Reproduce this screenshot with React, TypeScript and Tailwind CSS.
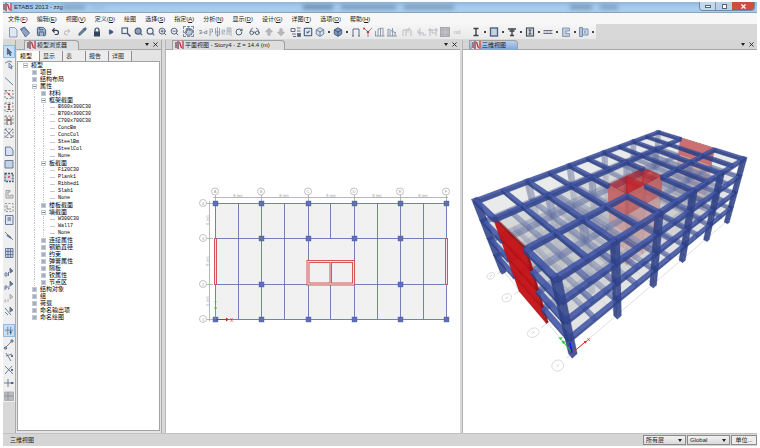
import { useState } from "react";
import type { ReactNode } from "react";
import { Save, Undo2, Redo2, Pencil, Lock, Play, ZoomIn, ZoomOut, Search, Hand, RotateCcw, Glasses, ArrowBigUp, ArrowBigDown, Box, SquareCheck, X } from "lucide-react";

const MENUS: [string, string?][] = [
  ["文件", "F"], ["编辑", "E"], ["视图", "V"], ["定义", "D"], ["绘图"], ["选择", "S"], ["指定", "A"],
  ["分析", "N"], ["显示", "D"], ["设计", "G"], ["详图", "T"], ["选项", "O"], ["帮助", "H"],
];

/* level, label, state: "-" open, "+" closed, "" leaf */
const TREE: [number, string, string][] = [
  [0, "模型", "-"], [1, "项目", "+"], [1, "结构布局", "+"], [1, "属性", "-"],
  [2, "材料", "+"], [2, "框架截面", "-"],
  [3, "B600x300C30", ""], [3, "B700x300C30", ""], [3, "C700x700C30", ""], [3, "ConcBm", ""],
  [3, "ConcCol", ""], [3, "SteelBm", ""], [3, "SteelCol", ""], [3, "None", ""],
  [2, "板截面", "-"],
  [3, "F120C30", ""], [3, "Plank1", ""], [3, "Ribbed1", ""], [3, "Slab1", ""], [3, "None", ""],
  [2, "楼板截面", "+"], [2, "墙截面", "-"],
  [3, "W300C30", ""], [3, "Wall7", ""], [3, "None", ""],
  [2, "连接属性", "+"], [2, "钢筋直径", "+"], [2, "约束", "+"], [2, "弹簧属性", "+"],
  [2, "隔板", "+"], [2, "铰属性", "+"], [2, "节点区", "+"],
  [1, "结构对象", "+"], [1, "组", "+"], [1, "荷载", "+"], [1, "命名输出项", "+"], [1, "命名绘图", "+"],
];

/* ===== icons ===== */
function Glyph({ children }: { children: ReactNode }) {
  return (
    <svg viewBox="0 0 12 12" className="w-3 h-3" fill="none" stroke="#5f7291" strokeWidth=".9">{children}</svg>
  );
}

function AppLogo() {
  return (
    <svg viewBox="0 0 9 8" className="w-[9px] h-2 shrink-0">
      <rect width="9" height="8" fill="#ead9dd" />
      <path d="M1 1v6M3 0v8" stroke="#6b4659" strokeWidth="1.300" />
      <path d="M4.500 1L6.500 7M8 0v8" stroke="#b3303c" strokeWidth="1.200" />
    </svg>
  );
}

const dark = "#526079";
const pale = "#b3b6bb";
const dot = <circle cx="6" cy="6" r=".9" fill="#d03038" stroke="none" />;

type Tool = { name: string; icon?: ReactNode; gap?: string; drop?: boolean };

const TOOLS: Tool[] = [
  { name: "新建", icon: <Glyph><path d="M2.500 1.500h5l2.500 2.500v7h-7.500z" fill="#dfe8f2" stroke="#8292a8" /></Glyph> },
  { name: "打开", icon: <Glyph><path d="M1.500 3l4-2 5 6-4 4z" fill="#7b93b5" stroke="#50688c" /><path d="M3 5l5 4M4 3.500l5 4" stroke="#c8d5e6" strokeWidth=".6" /></Glyph> },
  { name: "保存", gap: "ml-1", icon: <Save size={11} color="#3f5779" fill="#a3b8d0" /> },
  { name: "撤销", gap: "ml-0.5", icon: <Undo2 size={9} strokeWidth={3} color="#36435a" /> },
  { name: "重做", icon: <Redo2 size={8} strokeWidth={3} color={pale} /> },
  { name: "刷新", gap: "ml-[3px]", icon: <Pencil size={9} color="#3a4d67" fill="#6c84a3" /> },
  { name: "锁定", gap: "ml-[3px]", icon: <Glyph><path d="M4 6V4a2 2 0 0 1 4 0v2" stroke="#34465f" strokeWidth="1.200" /><rect x="3" y="5.500" width="6" height="5" fill="#34465f" stroke="none" /></Glyph> },
  { name: "运行", gap: "ml-0.5", icon: <Play size={6} color="#3a5680" fill="#3a5680" /> },
  { name: "窗口缩放", gap: "ml-[3px]", icon: <Glyph><rect x="2" y="2" width="5.500" height="5.500" strokeWidth="1.200" stroke={dark} /><path d="M7.500 7.500l3 3" strokeWidth="1.600" stroke={dark} /></Glyph> },
  { name: "全部显示", icon: <Search size={9} strokeWidth={3} color={dark} fill="#8fa0b8" /> },
  { name: "上一视图", icon: <Search size={9} strokeWidth={3} color={dark} /> },
  { name: "放大", icon: <ZoomIn size={9} strokeWidth={2.5} color={dark} /> },
  { name: "缩小", icon: <ZoomOut size={9} strokeWidth={2.5} color={dark} /> },
  { name: "平移", gap: "ml-0.5", icon: <span className="border border-dashed border-[#7d8ba0]"><Hand size={9} strokeWidth={2.5} color={dark} fill="#b9c9dc" /></span> },
  { name: "三维", gap: "ml-[3px]", icon: <span className="text-[6px] text-[#4d5a70]">3-d</span> },
  { name: "平面", icon: <Glyph><path d="M1 10V3h2.500v3H1M6.500 2v4h4M6.500 8v-2M10.500 2v7h-4M8.500 1v10" stroke="#8490a4" strokeWidth=".8" /></Glyph> },
  { name: "立面", icon: <Glyph><path d="M4 6H1v-2h2.500v2M1 6v2h3M6 2v7M6 2h4v3h-4M10 5v5M8 2v7" stroke="#9aa4b3" strokeWidth=".8" /></Glyph> },
  { name: "旋转", icon: <RotateCcw size={8} strokeWidth={3} color={dark} className="-scale-x-100" /> },
  { name: "透视", gap: "ml-[3px]", icon: <Glasses size={11} color={dark} /> },
  { name: "上移", gap: "ml-[3px]", icon: <ArrowBigUp size={10} strokeWidth={2} color={pale} fill={pale} /> },
  { name: "下移", icon: <ArrowBigDown size={10} strokeWidth={2} color={pale} fill={pale} /> },
  { name: "对象", gap: "ml-[3px]", icon: <Glyph><path d="M1 2.500h4v3H1zM7 2h3.500M7 5h3.500M2 8h4M3 10.500h3" stroke={dark} /><rect x="7.500" y="7.500" width="3" height="3" fill={dark} /></Glyph> },
  { name: "显示选项", icon: <SquareCheck size={10} strokeWidth={2.5} color="#3f5374" fill="#dbe6f3" /> },
  { name: "选定", drop: true, icon: <Box size={10} color="#5b7291" fill="#d3dfec" /> },
  { name: "实体", drop: true, icon: <Box size={10} color="#3b5172" fill="#7d97b8" /> },
  { name: "框架", icon: <Glyph><path d="M3 10V3h6v7M2 10h2M8 10h2" stroke={dark} /></Glyph> },
  { name: "变形", icon: <Glyph><path d="M2 2l4 4 4-4M6 6v5" stroke="#777f8d" /><circle cx="6" cy="6" r="1.300" fill="#cf3340" stroke="none" /><circle cx="2" cy="2.500" r="1" fill="#cf3340" stroke="none" /></Glyph> },
  { name: "内力", icon: <Glyph><path d="M1.500 10V5M4 10V3M6.500 10V2M9 10V2M1 10h9.500M4 3l5-1" stroke="#8593a8" /></Glyph> },
  { name: "能量", icon: <Glyph><path d="M2 10V3M4 10V5M6.500 10V2M9 10V6M1 10h10M2 3l8 4" stroke="#8593a8" /></Glyph> },
  { name: "设计", gap: "ml-[3px]", icon: <Glyph><path d="M2 10V4h3v6M5 4l4-2M7 4h3v6M7 4v3" stroke={pale} /></Glyph> },
  { name: "校核", gap: "ml-0.5", icon: <Glyph><path d="M5 2v8M3 4v3h4M8 6v3h3" stroke={pale} /></Glyph> },
  { name: "连接", icon: <Glyph><path d="M1 4h10M3 2v8M9 2v8M5 4v3h3" stroke={pale} /></Glyph> },
  { name: "网格", icon: <Glyph><rect x="1.500" y="1.500" width="9" height="9" fill="#b2b4b8" stroke="#a2a5a9" /><path d="M6 2v8M2 6h8" stroke="#c6c8cb" /></Glyph> },
  { name: "无", icon: <span className="text-[6px] text-[#b0b3b8]">nd</span> },
  { name: "钢框架设计", gap: "ml-[7px]", drop: true, icon: <Glyph><path d="M3.500 2.500h5M3.500 9.500h5M6 2.500v7" stroke="#3a404a" strokeWidth="1.400" /></Glyph> },
  { name: "混凝土框架设计", drop: true, icon: <Glyph><rect x="2.500" y="2" width="7" height="8" fill="#c3d3e6" stroke="#51637f" strokeWidth="1.400" /></Glyph> },
  { name: "组合梁设计", drop: true, icon: <Glyph><path d="M2 3h8M6 3v7M4 9.500h4M3.500 5h5" stroke="#3a404a" strokeWidth="1.300" /></Glyph> },
  { name: "组合柱设计", drop: true, icon: <Glyph><rect x="2.500" y="2" width="7" height="8" stroke="#4a5361" fill="#d7dde5" strokeWidth="1.200" /><path d="M4.500 4h3M4.500 8h3M6 4v4" stroke="#2e3440" /></Glyph> },
  { name: "钢桁架设计", drop: true, icon: <Glyph><path d="M1.500 4.500h9M1.500 7.500h9" stroke="#596270" /><path d="M1.500 6h9" stroke="#7c8592" strokeDasharray="2 1" /></Glyph> },
  { name: "剪力墙设计", drop: true, icon: <Glyph><path d="M2.500 2h7v3h-3.500v2.500h3.500v3h-7z" fill="#b9cbe0" stroke="#8496ad" /></Glyph> },
  { name: "钢连接设计", drop: true, icon: <Glyph><path d="M1.500 1.500h3v9h-3z" fill="#a9c2e0" stroke="#7389a8" /><path d="M4.500 3h5.500v6h-5.500z" fill="#cfdae6" stroke="#7389a8" /><path d="M7 4.500v3" /></Glyph> },
];

/* the drawing tools on the left edge, in groups */
const SIDE: { gap: string; items: [string, ReactNode][] }[] = [
  { gap: "", items: [
    ["选择", <path d="M4 1.500v7.500l1.800-1.500 1.500 3 1.200-.6-1.500-2.900h2.300z" fill="#4f6b97" stroke="#2f4a75" strokeWidth=".7" />],
    ["重塑", <path d="M2 4l4-2 3 1M6 4v5l1-1 1 2 1-.5-1-2h1.500z" fill="#cbd5e2" strokeWidth=".8" />],
  ] },
  { gap: "mt-[3px]", items: [
    ["绘制线", <path d="M2 2.500l8 7.500" />],
    ["快速线", <><path d="M2 2.500h8v8h-8z" strokeDasharray="2 1.500" stroke="#777" /><path d="M2 2.500l8 8" />{dot}</>],
    ["快速柱", <><path d="M2 2h8v8.500h-8z" strokeDasharray="2 1.500" stroke="#777" /><path d="M6 3.500v5M4.500 3.500h3M4.500 8.500h3" stroke="#444" />{dot}</>],
    ["次梁", <><path d="M2 2h8v8.500h-8z" strokeDasharray="2 1.500" stroke="#777" /><path d="M4 3v7M8 3v7M4 6h4" stroke="#444" />{dot}</>],
    ["支撑", <><path d="M2 2h8v8.500h-8z" strokeDasharray="2 1.500" stroke="#777" /><path d="M2 2l8 8.500M10 2l-8 8.500" /></>],
  ] },
  { gap: "mt-[5px]", items: [
    ["多边形板", <path d="M2.500 2h5l2.500 3v5.500h-7.500z" fill="#d5e1ee" />],
    ["矩形板", <path d="M2 2.500h8v7.500h-8z" fill="#c3d3e4" />],
    ["快速板", <><path d="M2 2.500h8v8h-8z" fill="#cddbe9" strokeDasharray="2 1" stroke="#4f5765" strokeWidth="1.300" />{dot}</>],
  ] },
  { gap: "mt-1", items: [
    ["绘制墙", <path d="M7 2.500H3v7.500h7V7H8v1H5V4h2z" fill="#e4e4e4" stroke="#999" />],
    ["快速墙", <><path d="M2 2.500h8v8h-8z" strokeDasharray="2 1.500" stroke="#888" /><path d="M4 4v4h4" stroke="#888" /></>],
    ["墙洞", <><path d="M2.500 1.500h7.500v9h-7.500z" fill="#dae5f1" /><path d="M4.500 4h3.500M4.500 6h3.500" stroke="#3d4f6d" /></>],
  ] },
  { gap: "mt-[3px]", items: [["连接", <><path d="M2 2l8 8" stroke="#777" /><path d="M4 5l4 3" strokeWidth="1.800" /></>]] },
  { gap: "mt-1", items: [["轴网", <><path d="M2.500 1.500h7.500v9h-7.500z" fill="#c9d8e8" /><path d="M5 2v8.500M7.500 2v8.500M2.500 4.500h7.500M2.500 7.500h7.500" /></>]] },
  { gap: "mt-1.5", items: [
    ["全选", <><path d="M2 10V7h2v3H2M5.500 6v4" strokeWidth=".9" /><path d="M7 2l3 3-3 2z" fill="#5f7aa3" /></>],
    ["前次选择", <><path d="M2 11V7h2v2H2M6 7v3h-1" strokeWidth=".9" /><path d="M7 2l3 3-3 2z" fill="#5f7aa3" /></>],
    ["清除选择", <><path d="M3 8h-1v2h1M5 7v3" stroke="#aaa" /><path d="M7 2l3 3-3 2z" fill="#ccc" stroke="#aaa" /></>],
    ["相交选择", <><path d="M2 3l6 7M2 7l3 3" /><path d="M7 2l3 3-3 2z" fill="#5f7aa3" /></>],
  ] },
  { gap: "mt-[7px]", items: [
    ["捕捉点", <><path d="M1 5h10M4.500 1v9.500M8 1v9.500" stroke="#56759f" /><circle cx="8" cy="7.500" r="1.200" fill="#345" stroke="none" /></>],
    ["捕捉端点", <><path d="M2 10l7-7" /><path d="M1.500 9h2v2h-2zM8 2h2v2h-2z" fill="#9fb0c6" /></>],
    ["捕捉中点", <><path d="M3 2l5 8M3 5l6-2" /><circle cx="9" cy="5" r="1" fill="#345" stroke="none" /></>],
    ["捕捉交点", <><path d="M2 2l8 8M9 2l-7 8" /><circle cx="9" cy="6" r="1" fill="#345" stroke="none" /></>],
    ["捕捉垂足", <><path d="M1 6h10M5 2v8" /><circle cx="9" cy="6" r="1" fill="#345" stroke="none" /></>],
    ["捕捉网格", <><path d="M1.500 2h9v8.500h-9z" fill="#b8bbbf" stroke="#aaa" /><path d="M1.500 6h9M5 2v8" stroke="#8d9095" /></>],
  ] },
];

/* ===== plan view ===== */
const PX = [215, 261, 308, 354, 400, 446];
const PY = [203, 238, 284, 319];

function PlanView() {
  const mids = [238, 284, 331, 377, 423];
  const skip = ["0,1", "0,2", "5,1", "5,2", "2,2", "3,2"];
  return (
    <svg viewBox="166 50 294 383" className="w-full h-full" fontFamily="Liberation Sans, sans-serif">
      <rect x="215" y="203" width="231" height="116" fill="#f1f1f1" />
      <g stroke="#a5a5a5" strokeWidth=".8" fill="none">
        <path d="M213 197.500H448M209.500 201V321" />
        {PX.map(x => <path key={x} d={`M${x + .5} 195V203`} />)}
        {PY.map(y => <path key={y} d={`M207 ${y + .5}H213`} />)}
      </g>
      {PX.map((x, i) => (
        <g key={x}>
          <circle cx={x} cy="191.500" r="3.500" fill="#fff" stroke="#b3b3b3" strokeWidth=".8" />
          <text x={x} y="193" fontSize="4" textAnchor="middle" fill="#999">{"ABCDEF"[i]}</text>
          {i < 5 && <text x={x + 23} y="196.500" fontSize="4" textAnchor="middle" fill="#999">8 (m)</text>}
        </g>
      ))}
      {PY.map((y, i) => (
        <g key={y}>
          <circle cx="203" cy={y} r="3.500" fill="#fff" stroke="#b3b3b3" strokeWidth=".8" />
          <text x="203" y={y + 1.500} fontSize="4" textAnchor="middle" fill="#999">{4 - i}</text>
        </g>
      ))}
      {[220, 261, 301].map((y, i) => (
        <text key={y} transform={`translate(208.500 ${y}) rotate(-90)`} fontSize="4" textAnchor="middle" fill="#999">{i === 1 ? "8 (m)" : "6 (m)"}</text>
      ))}
      <g stroke="#6373ae" strokeWidth=".9" fill="none">
        {PY.map(y => <path key={y} d={`M215 ${y + .5}H446`} />)}
        {PX.map(x => <path key={x} d={`M${x + .5} 203V319`} />)}
        {mids.map(x => x === 331
          ? <path key={x} d="M330.500 203V238M330.500 284V319" />
          : <path key={x} d={`M${x + .5} 203V319`} />)}
      </g>
      <g stroke="#d4565b" fill="none" strokeWidth="1">
        <rect x="214.500" y="238.500" width="2" height="46" fill="#fbe4e4" />
        <rect x="445.500" y="238.500" width="2" height="46" fill="#fbe4e4" />
        <rect x="307" y="260.500" width="47.500" height="24.500" fill="#fbe4e4" />
        <rect x="309" y="262.500" width="21" height="20.500" fill="#f1f1f1" />
        <rect x="331.500" y="262.500" width="21" height="20.500" fill="#f1f1f1" />
      </g>
      {PX.map((x, i) => PY.map((y, j) => skip.includes(`${i},${j}`) ? null
        : <rect key={`${x}-${y}`} x={x - 2} y={y - 2} width="5" height="5" fill="#5f6fb5" stroke="#4a5aa0" strokeWidth=".4" />))}
      <path d="M215.500 319V304M214 308h3" stroke="#21d336" />
      <path d="M216 319.500H227" stroke="#d22" />
      <path d="M226 317.500l3 2-3 2z" fill="#d22" />
      <text x="230" y="321.500" fontSize="5" fill="#d22">X</text>
      <text x="214" y="304" fontSize="4" fill="#21d336">Y</text>
    </svg>
  );
}

/* ===== 3D view ===== */
type P3 = [number, number, number];
type Shape = { depth: number; pts: string; fill: string; opacity: number; edge: string };

const depthOf = ([x, y, z]: P3) => 1 + 0.01591 * x + 0.01605 * y - 0.0165 * z;

function project(p: P3): [number, number] {
  const [x, y, z] = p;
  const w = depthOf(p);
  return [(572 + 15.44 * x + 4.55 * y - 10.34 * z) / w, (353 + 0.216 * x + 0.225 * y - 9.847 * z) / w];
}

const poly = (pts: P3[]) => pts.map(p => project(p).map(n => n.toFixed(1)).join(",")).join(" ");

/* the eye is always above and on the -x / -y side, so only these three faces show */
function box([x0, y0, z0]: P3, [x1, y1, z1]: P3, fills: string[], edge: string, opacity: number): Shape[] {
  const depth = depthOf([(x0 + x1) / 2, (y0 + y1) / 2, (z0 + z1) / 2]);
  const faces: P3[][] = [
    [[x0, y0, z0], [x0, y1, z0], [x0, y1, z1], [x0, y0, z1]],
    [[x0, y0, z0], [x1, y0, z0], [x1, y0, z1], [x0, y0, z1]],
    [[x0, y0, z1], [x1, y0, z1], [x1, y1, z1], [x0, y1, z1]],
  ];
  return faces.map((f, i) => ({ depth, pts: poly(f), fill: fills[i], opacity, edge }));
}

const BLUE = ["#2f4185", "#34478f", "#4458a8"];
const GX = [0, 8, 16, 24, 32, 40];
const GY = [0, 6, 14, 20];
const H = 3.6;

function buildModel() {
  const out: Shape[] = [];
  const far = (a: Shape, b: Shape) => b.depth - a.depth;
  for (let s = 0; s < 4; s++) {
    const z0 = s * H;
    const z1 = z0 + H;
    const parts: Shape[] = [];
    /* columns, the inner ones more transparent */
    GX.forEach(x => GY.forEach(y => {
      const inner = y === 6 || y === 14;
      if (inner && (x === 0 || x === 40)) return;
      if (y === 6 && (x === 16 || x === 24)) return;
      const alpha = y === 0 || x === 0 ? 0.9 : 0.5;
      parts.push(...box([x - 0.4, y - 0.4, s === 0 ? -0.3 : z0], [x + 0.4, y + 0.4, z1], BLUE, "#273775", alpha));
    }));
    /* walls */
    const near = ["#c41418", "#a01014", "#8a0d11"];
    const red = ["#c8262a", "#b8262a", "#c04044"];
    const top = s === 3;
    parts.push(...box([-0.15, 6, z0], [0.15, 14, z1], near, "#7c0c10", 0.97));
    parts.push(...box([39.9, 6, z0], [40.1, 14, z1], red, "#a83c40", top ? 0.9 : 0.7));
    [16, 20, 24].forEach(x => parts.push(...box([x - 0.1, 6, z0], [x + 0.1, 10, z1], red, "#8f2226", top ? 0.75 : 0.6)));
    [16, 20].forEach(x => [6, 10].forEach(y =>
      parts.push(...box([x, y - 0.1, z0], [x + 4, y + 0.1, z1], red, "#8f2226", top ? 0.7 : 0.55))));
    out.push(...parts.sort(far));

    /* floor plate, left open over the core */
    const slab = (x0: number, y0: number, x1: number, y1: number) => out.push({
      depth: 0, pts: poly([[x0, y0, z1], [x1, y0, z1], [x1, y1, z1], [x0, y1, z1]]),
      fill: "#c6c7c9", opacity: top ? 0.38 : 0.5, edge: "none",
    });
    slab(0, 0, 16, 20);
    slab(16, 0, 24, 6);
    slab(16, 10, 24, 20);
    slab(24, 0, 40, 20);

    /* beams */
    const beams: Shape[] = [];
    const zb = z1 - 0.65;
    GX.slice(0, 5).forEach(x => GY.forEach(y => {
      if (x === 16 && y === 6) return;
      const alpha = top || y === 0 ? 0.9 : 0.6;
      beams.push(...box([x, y - 0.3, zb], [x + 8, y + 0.3, z1], BLUE, "#2a3a7c", alpha));
    }));
    for (let x = 0; x <= 40; x += 4) {
      [[0, 6], [6, 14], [14, 20]].forEach(([y0, y1]) => {
        if (y0 === 6 && (x === 0 || x === 20 || x === 40)) return;
        const start = y0 === 6 && (x === 16 || x === 24) ? 10 : y0;
        const t = x % 8 === 0 ? 0.3 : 0.25;
        const alpha = top || x === 0 ? 0.9 : 0.6;
        beams.push(...box([x - t, start, zb], [x + t, y1, z1], BLUE, "#2a3a7c", alpha));
      });
    }
    out.push(...beams.sort(far));
  }
  return out;
}

const MODEL = buildModel();

function ModelView() {
  const bubbles = [[490, 276, 4, 3], [506, 298, 5, 4], [532.5, 333, 6, 4.5], [557, 366, 6, 5.5]];
  return (
    <svg viewBox="462 50 295 383" className="w-full h-full">
      <g stroke="#cfcfcf" strokeWidth=".7" fill="none">
        {GX.map(x => <polyline key={x} points={poly([[x, 0, 0], [x, 20, 0]])} />)}
        {GY.map(y => <polyline key={y} points={poly([[-1, y, 0], [40, y, 0]])} />)}
        {bubbles.map(([cx, cy, rx, ry]) => (
          <g key={cx}>
            <ellipse cx={cx} cy={cy} rx={rx} ry={ry} transform={`rotate(-25 ${cx} ${cy})`} />
            <path d={`M${cx - 1} ${cy + 1}l2-2`} stroke="#aaa" />
          </g>
        ))}
      </g>
      {MODEL.map((f, i) => (
        <polygon key={i} points={f.pts} fill={f.fill} fillOpacity={f.opacity} stroke={f.edge} strokeWidth=".4" strokeOpacity={f.opacity * 0.7} />
      ))}
      <path d="M572 353L585 342" stroke="#e22" />
      <path d="M583 341.500l3.500-.5-1.500 3z" fill="#e22" />
      <path d="M586.500 338.500l3 3M589.500 338.500l-3 3" stroke="#e22" strokeWidth=".7" />
      <path d="M571 352L562 342" stroke="#1fcf33" />
      <path d="M561 341l3.500 1-2 2zM558 338l2 2 1.500-2.500" fill="#1fcf33" stroke="#1fcf33" strokeWidth=".6" />
      <path d="M571.500 353L569 343" stroke="#1414e6" strokeWidth="1.500" />
    </svg>
  );
}

/* ===== panels ===== */
function PanelHead({ title, active, indent, pad }: { title: string; active?: boolean; indent: string; pad: string }) {
  return (
    <div className={`h-[10px] shrink-0 flex items-center bg-[#d5d5d5] border-b border-[#a6a6a6] ${indent}`}>
      <h2 className={`h-[10px] flex items-center gap-px pl-0.5 rounded-tr-sm border border-b-0 border-[#9f9f9f] whitespace-nowrap ${pad} ${
        active ? "bg-linear-to-b from-[#b7d0ef] to-[#7fa5dc]" : "bg-[#dedede]"
      }`}>
        <AppLogo />{title}
      </h2>
      <span className="flex-1" />
      <button aria-label="窗口位置" className="w-2 flex justify-center">
        <svg viewBox="0 0 4 3" className="w-1 h-[3px]"><path d="M0 0h4L2 3z" fill="#222" /></svg>
      </button>
      <button aria-label="关闭" className="w-2 mr-0.5 flex justify-center"><X size={7} strokeWidth={3} color="#222" /></button>
    </div>
  );
}

function ModelTree() {
  return (
    <ul className="pl-[3px]">
      {TREE.map(([level, label, state], i) => (
        <li key={i} className="h-[7px] flex items-center leading-[7px] whitespace-nowrap">
          {Array.from({ length: level }, (_, n) => (
            <span key={n} className="w-[9px] h-[7px] flex justify-center shrink-0">
              {n > 0 && <span className="border-l border-dotted border-[#c4c4c4] h-[7px]" />}
            </span>
          ))}
          <span className="w-[9px] shrink-0 flex items-center justify-center">
            {state
              ? <button aria-label={label} className="w-[5px] h-[5px] border border-[#c3c9d3] bg-white flex items-center justify-center">
                  <span className={state === "+" ? "w-[3px] h-[3px] bg-[#a3aec2]" : "w-[3px] h-px bg-[#7b879e]"} />
                </button>
              : <span className="w-[5px] border-t border-[#c8c8c8]" />}
          </span>
          <span className={state ? "pl-px" : "pl-px font-['Liberation_Mono',monospace] text-[5px]"}>{label}</span>
        </li>
      ))}
    </ul>
  );
}

export default function App() {
  const [tab, setTab] = useState("模型");
  const tabs = ["模型", "显示", "表", "报告", "详图"];

  return (
    <div className="h-screen flex flex-col bg-white pl-[3px] pr-[3px] pt-0.5 pb-0.5 overflow-hidden font-['Liberation_Sans','Noto_Sans_CJK_SC',sans-serif] text-[6px] leading-[8px] text-[#222]">
      {/* title bar */}
      <header className="h-[11px] shrink-0 flex items-center bg-linear-to-b from-[#8fb9dd] via-[#a5cbee] to-[#a9cdec] border-b border-[#88a5bd]">
        <AppLogo />
        <h1 className="ml-0.5 text-[6px] text-[#1c2733]">ETABS 2013 - zzg</h1>
        <div className="flex-1 flex items-center gap-2 blur-[2px]" aria-hidden="true">
          <span className="w-[22px] h-1 bg-[#7d9dbb]" />
          <span className="w-3 h-0.5 bg-[#8badcb]" />
          <span className="w-[182px]" />
          <span className="w-[30px] h-1 bg-[#6384a5]" />
          <span className="w-[55px] h-1 bg-[#7393b4]" />
          <span className="w-[50px] h-1 bg-[#7595b5]" />
          <span className="w-[100px]" />
          <span className="w-[22px] h-1 bg-[#7393b3]" />
          <span className="w-[18px] h-1 bg-[#7999b9]" />
        </div>
        <div className="flex self-start h-[9px] mr-0.5 rounded-b-sm overflow-hidden border border-t-0 border-[#6e8aa8]">
          <button aria-label="最小化" className="w-4 flex items-center justify-center bg-[#c3d8ec] border-r border-[#7893ae]"><span className="w-1.5 h-[3px] border border-[#53657a] bg-white" /></button>
          <button aria-label="还原" className="w-4 flex items-center justify-center bg-[#b9d0e8]"><span className="w-[5px] h-[5px] border border-[#53657a] bg-white" /></button>
          <button aria-label="关闭窗口" className="w-[22px] flex items-center justify-center bg-[#cc4e3f]"><X size={7} strokeWidth={4} color="#fff" /></button>
        </div>
      </header>

      {/* menu */}
      <nav className="h-[11px] shrink-0 flex items-center gap-[9px] pl-[5px] bg-[#f7f7f7]">
        {MENUS.map(([label, key]) => (
          <button key={label} className="whitespace-nowrap">{label}{key && <>(<u>{key}</u>)</>}</button>
        ))}
      </nav>

      {/* toolbar */}
      <div className="h-[15px] shrink-0 flex bg-[#d8d8d8]">
        <div className="flex items-center pl-1 bg-linear-to-b from-[#f6f6f6] to-[#e9e9e9]">
          {TOOLS.map(t => (
            <div key={t.name} className={`flex items-center shrink-0 ${t.gap ?? ""}`}>
              <button aria-label={t.name} className="w-3 h-3 flex items-center justify-center whitespace-nowrap">{t.icon}</button>
              {t.drop && <span className="w-1.5 flex justify-center"><span className="w-0.5 h-0.5 bg-[#444]" /></span>}
            </div>
          ))}
        </div>
      </div>

      <main className="flex-1 min-h-0 flex bg-[#d8d8d8] pt-px">
        <div className="w-3 shrink-0 flex flex-col pt-[5px]">
          <div className="flex flex-col bg-[#efefef]">
            {SIDE.map((g, i) => (
              <div key={i} className={`flex flex-col ${g.gap}`}>
                {g.items.map(([name, art]) => (
                  <button key={name} aria-label={name} className={`h-[13px] flex items-center justify-center ${
                    name === "选择" || name === "捕捉点" ? "bg-[#c4def5] border border-[#8fbbe5]" : ""
                  }`}><Glyph>{art}</Glyph></button>
                ))}
              </div>
            ))}
          </div>
        </div>

        {/* model browser */}
        <section className="w-[147px] shrink-0 flex flex-col border-x border-[#a9a9a9] bg-[#e4e4e4]">
          <PanelHead title="模型浏览器" indent="pl-2" pad="pr-[11px]" />
          <div role="tablist" className="h-[11px] shrink-0 flex items-end pl-px pt-px">
            {tabs.map(t => (
              <button key={t} role="tab" aria-selected={tab === t} onClick={() => setTab(t)}
                className={`w-[23px] h-[10px] pl-[3px] flex items-center border-r border-[#8f8f8f] ${
                  tab === t ? "bg-white text-[#000]" : "bg-[#ececec] text-[#333]"
                }`}>{t}</button>
            ))}
          </div>
          <div className="flex-1 min-h-0 mx-px mb-0.5 border border-[#a3a3a3] bg-white text-black overflow-hidden">
            <ModelTree />
          </div>
        </section>

        <section className="flex-1 min-w-0 ml-[3px] flex flex-col bg-white border-l border-[#b5b5b5]">
          <PanelHead title="平面视图 - Story4 - Z = 14.4 (m)" indent="pl-1.5" pad="pr-[14px]" />
          <div className="flex-1 min-h-0"><PlanView /></div>
        </section>

        <section className="flex-1 min-w-0 ml-0.5 flex flex-col bg-white border-l border-[#b5b5b5]">
          <PanelHead title="三维视图" active indent="pl-1.5" pad="pr-[11px]" />
          <div className="flex-1 min-h-0"><ModelView /></div>
        </section>
      </main>

      {/* status bar */}
      <footer className="h-[13px] shrink-0 flex items-center gap-px pl-[7px] bg-[#d5d5d5] border-t border-[#c2c2c2]">
        <span className="flex-1">三维视图</span>
        {[["楼层", "所有层"], ["坐标系", "Global"]].map(([name, value]) => (
          <label key={name} className="relative">
            <select aria-label={name} className="appearance-none block w-[43px] h-[10px] pl-0.5 border border-[#8b8b8b] bg-linear-to-b from-[#f1f1f1] to-[#dadada]">
              <option>{value}</option>
            </select>
            <svg viewBox="0 0 4 3" className="absolute right-1 top-1 w-1 h-[3px]"><path d="M0 0h4L2 3z" fill="#222" /></svg>
          </label>
        ))}
        <button className="w-[26px] h-[10px] flex items-center justify-center border border-[#8b8b8b] bg-[#ededed]">单位...</button>
      </footer>
    </div>
  );
}
